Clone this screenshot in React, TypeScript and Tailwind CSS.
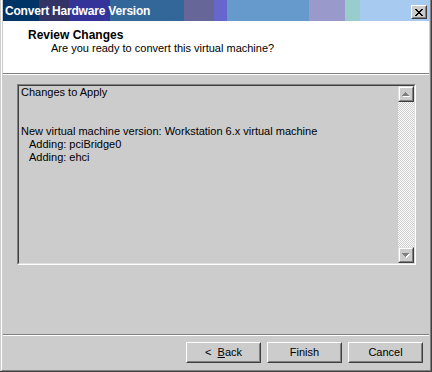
import React from 'react';

const font = { fontFamily: '"Liberation Sans", Arial, sans-serif' };

// pixel rows of the classic close glyph (8x7)
const closeRows: number[][] = [
  [0, 1, 6, 7],
  [1, 2, 5, 6],
  [2, 3, 4, 5],
  [3, 4],
  [2, 3, 4, 5],
  [1, 2, 5, 6],
  [0, 1, 6, 7],
];

function CloseGlyph() {
  return (
    <svg width="8" height="7" viewBox="0 0 8 7" shapeRendering="crispEdges">
      {closeRows.map((row, y) =>
        row.map((x) => <rect key={`${x}-${y}`} x={x} y={y} width="1" height="1" fill="#000" />)
      )}
    </svg>
  );
}

function Arrow({ down }: { down?: boolean }) {
  return (
    <svg width="8" height="5" viewBox="0 0 8 5" shapeRendering="crispEdges">
      {down ? (
        <>
          <path d="M1 1h7v1h-1v1h-1v1h-1v1h-1v-1h-1v-1h-1v-1h-1z" fill="#ffffff" />
          <path d="M0 0h7v1h-1v1h-1v1h-1v1h-1v-1h-1v-1h-1v-1h-1z" fill="#808080" />
        </>
      ) : (
        <>
          <path d="M4 1h1v1h1v1h1v1h1v1h-7v-1h1v-1h1v-1h1z" fill="#ffffff" />
          <path d="M3 0h1v1h1v1h1v1h1v1h-7v-1h1v-1h1v-1h1z" fill="#808080" />
        </>
      )}
    </svg>
  );
}

function ScrollButton({ down }: { down?: boolean }) {
  return (
    <div className="h-[16px] w-[16px] border border-t-[#dfdfdf] border-l-[#dfdfdf] border-r-[#404040] border-b-[#404040] bg-[#cccccc]">
      <div className="flex h-full w-full items-center justify-center border border-t-white border-l-white border-r-[#808080] border-b-[#808080]">
        <Arrow down={down} />
      </div>
    </div>
  );
}

function WizardButton({ children }: { children: React.ReactNode }) {
  return (
    <div className="h-[21px] w-[75px] border border-t-white border-l-white border-r-[#404040] border-b-[#404040] bg-[#cccccc]">
      <div className="flex h-full w-full items-center justify-center whitespace-pre border border-t-[#cccccc] border-l-[#cccccc] border-r-[#808080] border-b-[#808080] text-[11px] leading-[13px] text-black">
        {children}
      </div>
    </div>
  );
}

export default function App() {
  return (
    <div style={font} className="h-[372px] w-[432px] border-r border-b border-r-[#404040] border-b-[#404040] bg-[#cccccc]">
      <div className="ml-px flex h-full flex-col border-l border-r border-b border-l-white border-r-[#808080] border-b-[#808080] pl-px pr-px">
        {/* Title bar */}
        <div className="-mr-px flex h-[21px] shrink-0 items-start bg-[linear-gradient(to_right,#003366_36px,#333366_36px,#333366_66px,#333399_66px,#333399_107px,#336699_107px,#336699_181px,#666699_181px,#666699_211px,#6666cc_211px,#6666cc_224px,#6699cc_224px,#6699cc_306px,#9999cc_306px,#9999cc_342px,#99cccc_342px,#99cccc_357px,#a6caf0_357px)]">
          <span className="flex-1 pl-[2px] pt-[2px] text-[12px] font-bold leading-[19px] tracking-[-0.2px] text-white">
            Convert Hardware Version
          </span>
          <div className="mr-[3px] mt-[5px] h-[14px] w-[16px] border border-t-white border-l-white border-r-[#404040] border-b-[#404040] bg-[#cccccc]">
            <div className="flex h-full w-full items-center justify-center border border-t-[#cccccc] border-l-[#cccccc] border-r-[#808080] border-b-[#808080]">
              <CloseGlyph />
            </div>
          </div>
        </div>

        {/* Header */}
        <div className="h-[54px] shrink-0 border-b border-b-white bg-white">
          <div className="h-[53px] border-b border-b-[#808080] pl-[25px] pt-[8px]">
            <div className="text-[12px] font-bold leading-[13px] text-black">Review Changes</div>
            <div className="pl-[23px] text-[11px] leading-[13px] text-black">
              Are you ready to convert this virtual machine?
            </div>
          </div>
        </div>

        {/* Body */}
        <div className="flex flex-1 flex-col">
          <div className="ml-[14px] mt-[9px] h-[181px] w-[399px] border border-t-[#808080] border-l-[#808080] border-r-white border-b-white">
            <div className="flex h-full w-full border border-t-[#404040] border-l-[#404040] border-r-[#dfdfdf] border-b-[#dfdfdf]">
              <div className="flex-1 pl-[2px] text-[11px] leading-[13px] text-black">
                <div>Changes to Apply</div>
                <div className="h-[13px]" />
                <div className="h-[13px]" />
                <div>New virtual machine version: Workstation 6.x virtual machine</div>
                <div className="pl-[8px]">Adding: pciBridge0</div>
                <div className="pl-[8px]">Adding: ehci</div>
              </div>
              <div className="flex w-[16px] flex-col">
                <ScrollButton />
                <div className="flex-1 bg-[repeating-conic-gradient(#ffffff_0%_25%,#cccccc_0%_50%)] bg-[length:2px_2px]" />
                <ScrollButton down />
              </div>
            </div>
          </div>
          <div className="flex-1" />
          <div className="h-[2px] border-t border-t-[#808080] border-b border-b-white" />
          <div className="flex justify-end gap-[6px] pb-[7px] pr-[6px] pt-[6px]">
            <WizardButton>
              {'<  '}
              <span className="underline underline-offset-1">B</span>
              {'ack'}
            </WizardButton>
            <WizardButton>Finish</WizardButton>
            <WizardButton>Cancel</WizardButton>
          </div>
        </div>
      </div>
    </div>
  );
}
